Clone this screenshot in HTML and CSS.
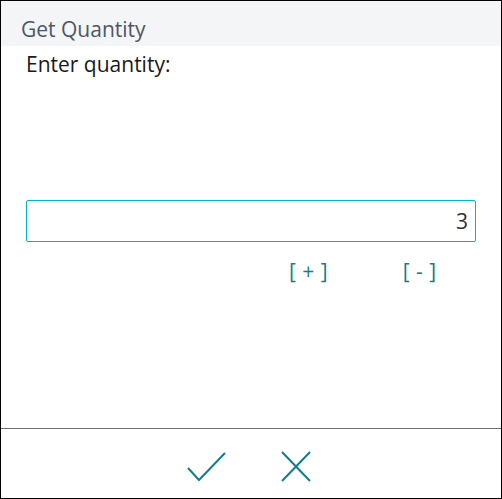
FILE: index.html
```html
<!DOCTYPE html>
<html>
<head>
<meta charset="utf-8">
<link rel="stylesheet" href="styles.css">
</head>
<body>
<div class="dialog">
  <div class="header">Get Quantity</div>
  <div class="content">
    <div class="prompt">Enter quantity:</div>
    <div class="field"><span class="value">3</span></div>
    <div class="steps">
      <span class="step">[ + ]</span>
      <span class="step">[ - ]</span>
    </div>
  </div>
  <div class="footer">
    <svg class="icon" width="39" height="30" viewBox="0 0 39 30">
      <path d="M1 16 L12 28 L38 1" fill="none" stroke="#0f7f8a" stroke-width="2"/>
    </svg>
    <svg class="icon" width="30" height="31" viewBox="0 0 30 31">
      <path d="M1 1 L29 30 M29 1 L1 30" fill="none" stroke="#0f7f8a" stroke-width="2"/>
    </svg>
  </div>
</div>
</body>
</html>
```
FILE: styles.css
```css
html, body {
  margin: 0;
  padding: 0;
  background: #fff;
}
.dialog {
  width: 502px;
  height: 499px;
  box-sizing: border-box;
  border: 1px solid #000;
  display: flex;
  flex-direction: column;
  font-family: "Open Sans", "Noto Sans", sans-serif;
}
.header {
  height: 45px;
  background: #f4f5f7;
  color: #4d5567;
  font-size: 21px;
  line-height: 34px;
  padding: 11px 0 0 20px;
  box-sizing: border-box;
}
.content {
  flex: 1;
  padding: 0 25px;
  display: flex;
  flex-direction: column;
}
.prompt {
  font-size: 21px;
  color: #1a1a1a;
  margin-top: 3px;
  line-height: 30px;
}
.field {
  margin-top: 121px;
  height: 42px;
  box-sizing: border-box;
  border: 1px solid #00b7c3;
  border-radius: 2px;
  display: flex;
  align-items: center;
  justify-content: flex-end;
  padding-right: 7px;
  font-size: 21px;
  color: #333;
}
.steps {
  display: flex;
  margin-top: 16px;
  padding-left: 263px;
  gap: 75px;
  font-size: 21px;
  color: #0f7f8a;
  line-height: 26px;
  word-spacing: 1px;
}
.footer {
  height: 70px;
  border-top: 1px solid #707070;
  box-sizing: border-box;
  display: flex;
  align-items: center;
  justify-content: center;
  gap: 55px;
  padding: 6px 4px 0 0;
}
.icon {
  display: block;
}
```
